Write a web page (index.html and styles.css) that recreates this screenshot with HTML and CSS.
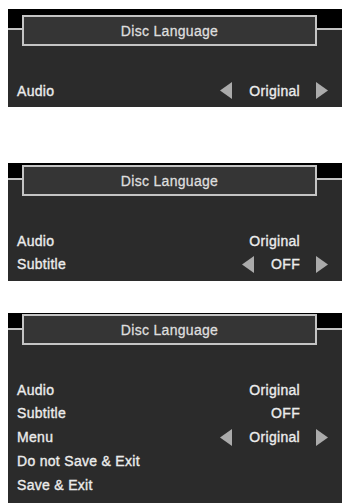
FILE: index.html
```html
<!DOCTYPE html>
<html lang="en">
<head>
  <meta charset="UTF-8">
  <title>Disc Language</title>
  <link rel="stylesheet" href="styles.css">
</head>
<body>
  <!-- step 1: audio selected -->
  <div class="panel p1">
    <div class="head">
      <div class="side left"></div>
      <div class="title">Disc Language</div>
      <div class="side right"></div>
    </div>
    <div class="rows">
      <div class="row sel">
        <span class="label">Audio</span>
        <span class="val"><svg class="arr" viewBox="0 0 13 17"><polygon points="12,0 12,17 0,8.5"/></svg><span class="txt">Original</span><svg class="arr" viewBox="0 0 13 17"><polygon points="1,0 1,17 13,8.5"/></svg></span>
      </div>
    </div>
  </div>

  <!-- step 2: subtitle selected -->
  <div class="panel p2">
    <div class="head">
      <div class="side left"></div>
      <div class="title">Disc Language</div>
      <div class="side right"></div>
    </div>
    <div class="rows">
      <div class="row">
        <span class="label">Audio</span>
        <span class="val"><span class="txt">Original</span></span>
      </div>
      <div class="row sel">
        <span class="label">Subtitle</span>
        <span class="val"><svg class="arr" viewBox="0 0 13 17"><polygon points="12,0 12,17 0,8.5"/></svg><span class="txt">OFF</span><svg class="arr" viewBox="0 0 13 17"><polygon points="1,0 1,17 13,8.5"/></svg></span>
      </div>
      <div class="row">
        <span class="label">Menu</span>
        <span class="val"><span class="txt">Original</span></span>
      </div>
    </div>
  </div>

  <!-- step 3: menu selected -->
  <div class="panel p3">
    <div class="head">
      <div class="side left"></div>
      <div class="title">Disc Language</div>
      <div class="side right"></div>
    </div>
    <div class="rows">
      <div class="row">
        <span class="label">Audio</span>
        <span class="val"><span class="txt">Original</span></span>
      </div>
      <div class="row">
        <span class="label">Subtitle</span>
        <span class="val"><span class="txt">OFF</span></span>
      </div>
      <div class="row sel">
        <span class="label">Menu</span>
        <span class="val"><svg class="arr" viewBox="0 0 13 17"><polygon points="12,0 12,17 0,8.5"/></svg><span class="txt">Original</span><svg class="arr" viewBox="0 0 13 17"><polygon points="1,0 1,17 13,8.5"/></svg></span>
      </div>
      <div class="row">
        <span class="label">Do not Save &amp; Exit</span>
      </div>
      <div class="row">
        <span class="label">Save &amp; Exit</span>
      </div>
    </div>
  </div>
</body>
</html>
```

FILE: styles.css
```css
body { margin: 0; background: #fff; font-family: "Liberation Sans", Arial, sans-serif; }

.panel { margin-left: 8px; width: 334px; background: #2b2b2b; color: #ececec; overflow: hidden; }
.p1 { margin-top: 9px; padding-bottom: 4px; }
.p2 { margin-top: 56px; height: 118px; }
.p3 { margin-top: 32px; height: 191px; }

.head { display: flex; align-items: flex-start; background: #000; background: linear-gradient(#000 0 var(--line), transparent var(--line)); }
.p1 .head { --line: 21px; }
.p2 .head { --line: 17px; }
.p3 .head { --line: 17px; }

.side { height: var(--line); box-sizing: border-box; border-bottom: 2px solid #c4c4c4; }
.side.left { width: 14px; }
.side.right { flex: 1; }

.title { width: 295px; box-sizing: border-box; height: 31px; border: 2px solid #c4c4c4; background: #353535;
  text-align: center; font-size: 14px; line-height: 28px; color: #dedede; letter-spacing: 0.3px;
  -webkit-text-stroke: 0.3px #dedede; }
.p1 .title { margin-top: 6px; }
.p2 .title { margin-top: 2px; }
.p3 .title { margin-top: 1px; }

.rows { padding: 33px 0 0 9px; }
.row { display: flex; align-items: center; height: 23.75px; font-size: 14px; letter-spacing: 0.3px;
  -webkit-text-stroke: 0.35px #ececec; }
.val { margin-left: auto; display: flex; align-items: center; padding-right: 42px; }
.row.sel .val { padding-right: 14px; }
.arr { width: 13px; height: 17px; fill: #ababab; }
.arr:first-child { margin-right: 16px; }
.arr:last-child { margin-left: 15px; }
```
